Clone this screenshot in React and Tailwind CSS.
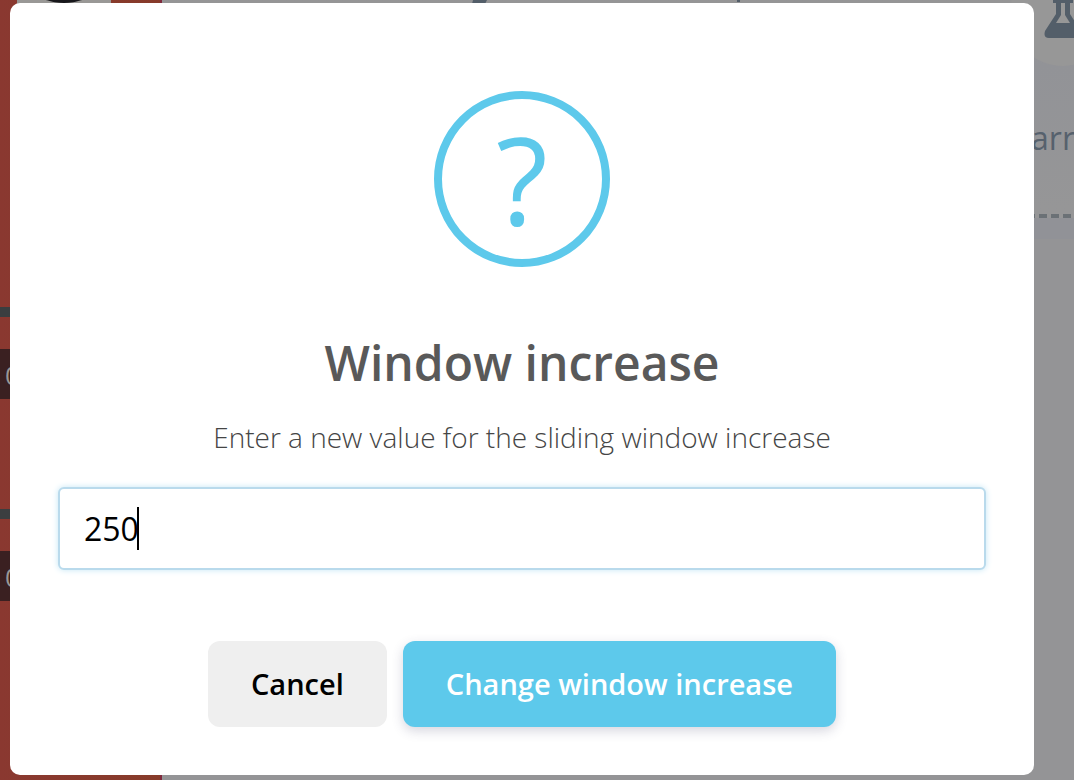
import { useState } from "react";

function Readout() {
  return (
    <div className="flex h-[50px] items-center overflow-hidden bg-[#3a2021] pt-0.5 pl-[5px] text-[26px] leading-none text-[#999797]">
      0
    </div>
  );
}

function Sidebar() {
  return (
    <aside className="flex w-[162px] shrink-0 flex-col border-r-2 border-[#7f2a3c] bg-linear-to-r from-[#8a3830] to-[#873b2a]">
      <div className="flex h-[307px] items-start">
        <div className="ml-[17px] flex h-[94px] w-[94px] justify-center overflow-hidden bg-[#999896]">
          <svg viewBox="0 0 94 94" className="h-full w-full" aria-hidden="true">
            <ellipse cx="47" cy="-6" rx="24" ry="9" fill="#17171b" />
          </svg>
        </div>
      </div>
      <div className="h-[10px] bg-[#3b3e40]" />
      <div className="h-8" />
      <Readout />
      <div className="h-[110px]" />
      <div className="h-[10px] bg-[#3b3e40]" />
      <div className="h-8" />
      <Readout />
    </aside>
  );
}

function Flask() {
  return (
    <svg viewBox="0 0 106 106" className="h-[106px] w-[106px]" aria-hidden="true">
      <circle cx="53" cy="53" r="53" fill="#979797" />
      <path
        d="M43 36h20v7h-3v11l11 17q2 7-4 7H39q-6 0-4-7l11-17V43h-3zM51 43v12l-5 8h14l-5-8V43z"
        fill="#535e69"
        fillRule="evenodd"
      />
    </svg>
  );
}

function Backdrop() {
  return (
    <div className="flex min-h-screen" aria-hidden="true">
      <Sidebar />
      <main className="flex grow flex-col overflow-hidden bg-[#949496]">
        <div className="flex h-[66px] items-end justify-between bg-linear-to-b from-[#959596] to-[#929397]">
          <svg viewBox="0 0 640 66" className="h-[66px] w-[640px]">
            <path d="M311 0h14l-2 4h-13zM575 0h3v2h-3z" fill="#535e69" />
          </svg>
          <div className="-mr-[42px]">
            <Flask />
          </div>
        </div>
        <div className="flex h-36 items-center justify-end bg-linear-to-b from-[#929397] to-[#969697]">
          <span className="-mr-px text-[32px] text-[#56616d]">arr</span>
        </div>
        <div className="h-1 bg-[#969697]" />
        <svg className="h-1 w-full bg-[#969697]">
          <line x1="1" y1="2" x2="100%" y2="2" stroke="#6b7176" strokeWidth="4" strokeDasharray="8 4" />
        </svg>
        <div className="h-[21px] bg-[#919297]" />
      </main>
    </div>
  );
}

export default function App() {
  const [value, setValue] = useState("250");
  return (
    <div className="relative font-['Open_Sans',sans-serif]">
      <Backdrop />
      <div className="absolute inset-0 flex items-start pt-[3px] pr-10 pl-[10px]">
        <div
          role="dialog"
          aria-modal="true"
          aria-labelledby="dialog-title"
          className="flex grow flex-col items-center rounded-[10px] bg-white px-12 pt-[88px] pb-12"
        >
          <div className="flex size-[176px] items-center justify-center rounded-full border-8 border-[#5dc9eb] text-[120px] leading-none text-[#5dc9eb]">
            ?
          </div>
          <h2 id="dialog-title" className="mt-16 text-[48px] leading-[64px] font-semibold text-[#595959]">
            Window increase
          </h2>
          <label htmlFor="increase" className="mt-[22px] text-[28px] leading-10 font-light text-[#454545]">
            Enter a new value for the sliding window increase
          </label>
          <div className="relative mt-[30px] w-full">
            <input
              id="increase"
              type="text"
              value={value}
              onChange={(e) => setValue(e.target.value)}
              className="block h-[83px] w-full rounded-md border-2 border-[#b9daec] bg-white px-6 text-[32px] text-black caret-transparent shadow-[0_0_6px_#c4e6f5] outline-none"
            />
            <span className="absolute top-5 left-[79px] h-[43px] w-0.5 bg-black" />
          </div>
          <div className="mt-[71px] flex gap-4">
            <button type="button" className="h-[86px] rounded-xl bg-[#efefef] px-[43px] text-[29px] font-semibold text-black">
              Cancel
            </button>
            <button
              type="button"
              className="h-[86px] rounded-xl bg-[#5dc9eb] px-[43px] text-[29px] font-semibold text-white shadow-[0_4px_12px_rgba(50,50,93,0.2)]"
            >
              Change window increase
            </button>
          </div>
        </div>
      </div>
    </div>
  );
}
